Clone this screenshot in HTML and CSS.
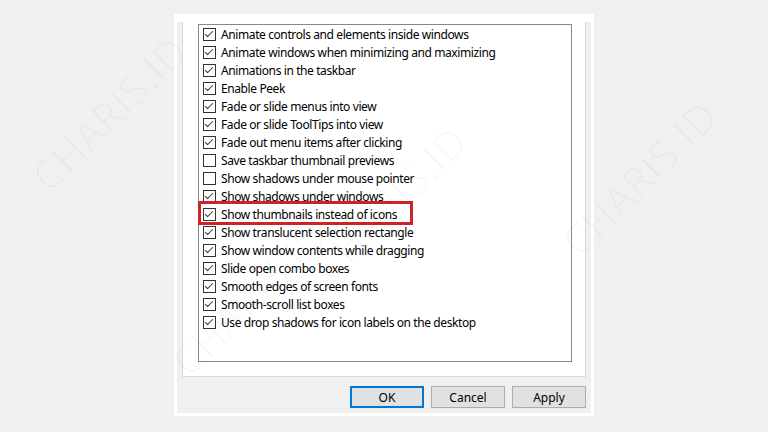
FILE: index.html
```html
<!DOCTYPE html>
<html>

<head>
    <title>Performance Options - Visual Effects</title>
    <meta charset="UTF-8">
    <link rel="stylesheet" href="styles.css">
</head>

<body>
    <div class="frame">
        <div class="dialog">
            <div class="tab-page">
                <div class="listbox">
                    <label class="item"><span class="check on"></span>Animate controls and elements inside windows</label>
                    <label class="item"><span class="check on"></span>Animate windows when minimizing and maximizing</label>
                    <label class="item"><span class="check on"></span>Animations in the taskbar</label>
                    <label class="item"><span class="check on"></span>Enable Peek</label>
                    <label class="item"><span class="check on"></span>Fade or slide menus into view</label>
                    <label class="item"><span class="check on"></span>Fade or slide ToolTips into view</label>
                    <label class="item"><span class="check on"></span>Fade out menu items after clicking</label>
                    <label class="item"><span class="check"></span>Save taskbar thumbnail previews</label>
                    <label class="item"><span class="check"></span>Show shadows under mouse pointer</label>
                    <label class="item"><span class="check on"></span>Show shadows under windows</label>
                    <label class="item"><span class="check on"></span>Show thumbnails instead of icons<span class="highlight"></span></label>
                    <label class="item"><span class="check on"></span>Show translucent selection rectangle</label>
                    <label class="item"><span class="check on"></span>Show window contents while dragging</label>
                    <label class="item"><span class="check on"></span>Slide open combo boxes</label>
                    <label class="item"><span class="check on"></span>Smooth edges of screen fonts</label>
                    <label class="item"><span class="check on"></span>Smooth-scroll list boxes</label>
                    <label class="item"><span class="check on"></span>Use drop shadows for icon labels on the desktop</label>
                </div>
            </div>
            <div class="buttons">
                <button class="default">OK</button>
                <button>Cancel</button>
                <button>Apply</button>
            </div>
        </div>
    </div>

    <!-- watermark -->
    <span class="mark m1">CHARIS.ID</span>
    <span class="mark m2">CHARIS.ID</span>
    <span class="mark m3">CHARIS.ID</span>
    <span class="mark m4">CHARIS.ID</span>
</body>

</html>
```

FILE: styles.css
```css
body {
    margin: 0;
    background-color: #f0f0f0;
    font-family: "Noto Sans", "Open Sans", sans-serif;
    font-size: 12px;
    color: #000;
    overflow: hidden;
    height: 432px;
    position: relative;
}

.frame {
    width: 420px;
    height: 402px;
    margin: 0 0 0 174px;
    position: relative;
    top: 14px;
    padding: 8px 3px 3px 3px;
    box-sizing: border-box;
    background-color: #fff;
}

.dialog {
    height: 100%;
    background-color: #f0f0f0;
    padding: 0 5px;
    display: flex;
    flex-direction: column;
}

/* Visual Effects tab */
.tab-page {
    background-color: #fff;
    border: 1px solid #d9d9d9;
    border-top: none;
    padding: 2px 13px 14px 15px;
}

.listbox {
    height: 338px;
    box-sizing: border-box;
    border: 1px solid #828790;
    background-color: #fff;
    padding-left: 4px;
}

.item {
    display: flex;
    align-items: center;
    height: 18px;
    white-space: nowrap;
    letter-spacing: -0.4px;
    position: relative;
}

.check {
    width: 13px;
    height: 13px;
    box-sizing: border-box;
    border: 1px solid #333;
    background-color: #fff;
    margin: 1px 5px 0 0;
    position: relative;
    flex-shrink: 0;
}

.check.on::after {
    content: '';
    position: absolute;
    left: 3px;
    top: 0px;
    width: 3px;
    height: 7px;
    border-right: 1px solid #333;
    border-bottom: 1px solid #333;
    transform: rotate(45deg);
}

/* red box round one item */
.highlight {
    position: absolute;
    left: -5px;
    top: -4px;
    width: 215px;
    height: 24px;
    box-sizing: border-box;
    border: 3px solid #cc2229;
}

.buttons {
    display: flex;
    justify-content: flex-end;
    gap: 7px;
    margin-top: 9px;
}

button {
    width: 74px;
    height: 22px;
    font-family: inherit;
    font-size: 12px;
    background-color: #e1e1e1;
    border: 1px solid #adadad;
    color: #000;
    padding: 0;
}

button.default {
    border: 2px solid #0078d7;
}

/* Watermark */
.mark {
    position: absolute;
    font-family: "Open Sans", sans-serif;
    font-weight: 300;
    font-size: 40px;
    letter-spacing: 2px;
    color: rgba(0, 0, 0, 0.04);
    transform: rotate(-45deg);
    pointer-events: none;
    white-space: nowrap;
}

.m1 { left: 10px; top: 85px; }
.m2 { left: 290px; top: 175px; }
.m3 { left: 150px; top: 270px; }
.m4 { left: 540px; top: 150px; }
```
